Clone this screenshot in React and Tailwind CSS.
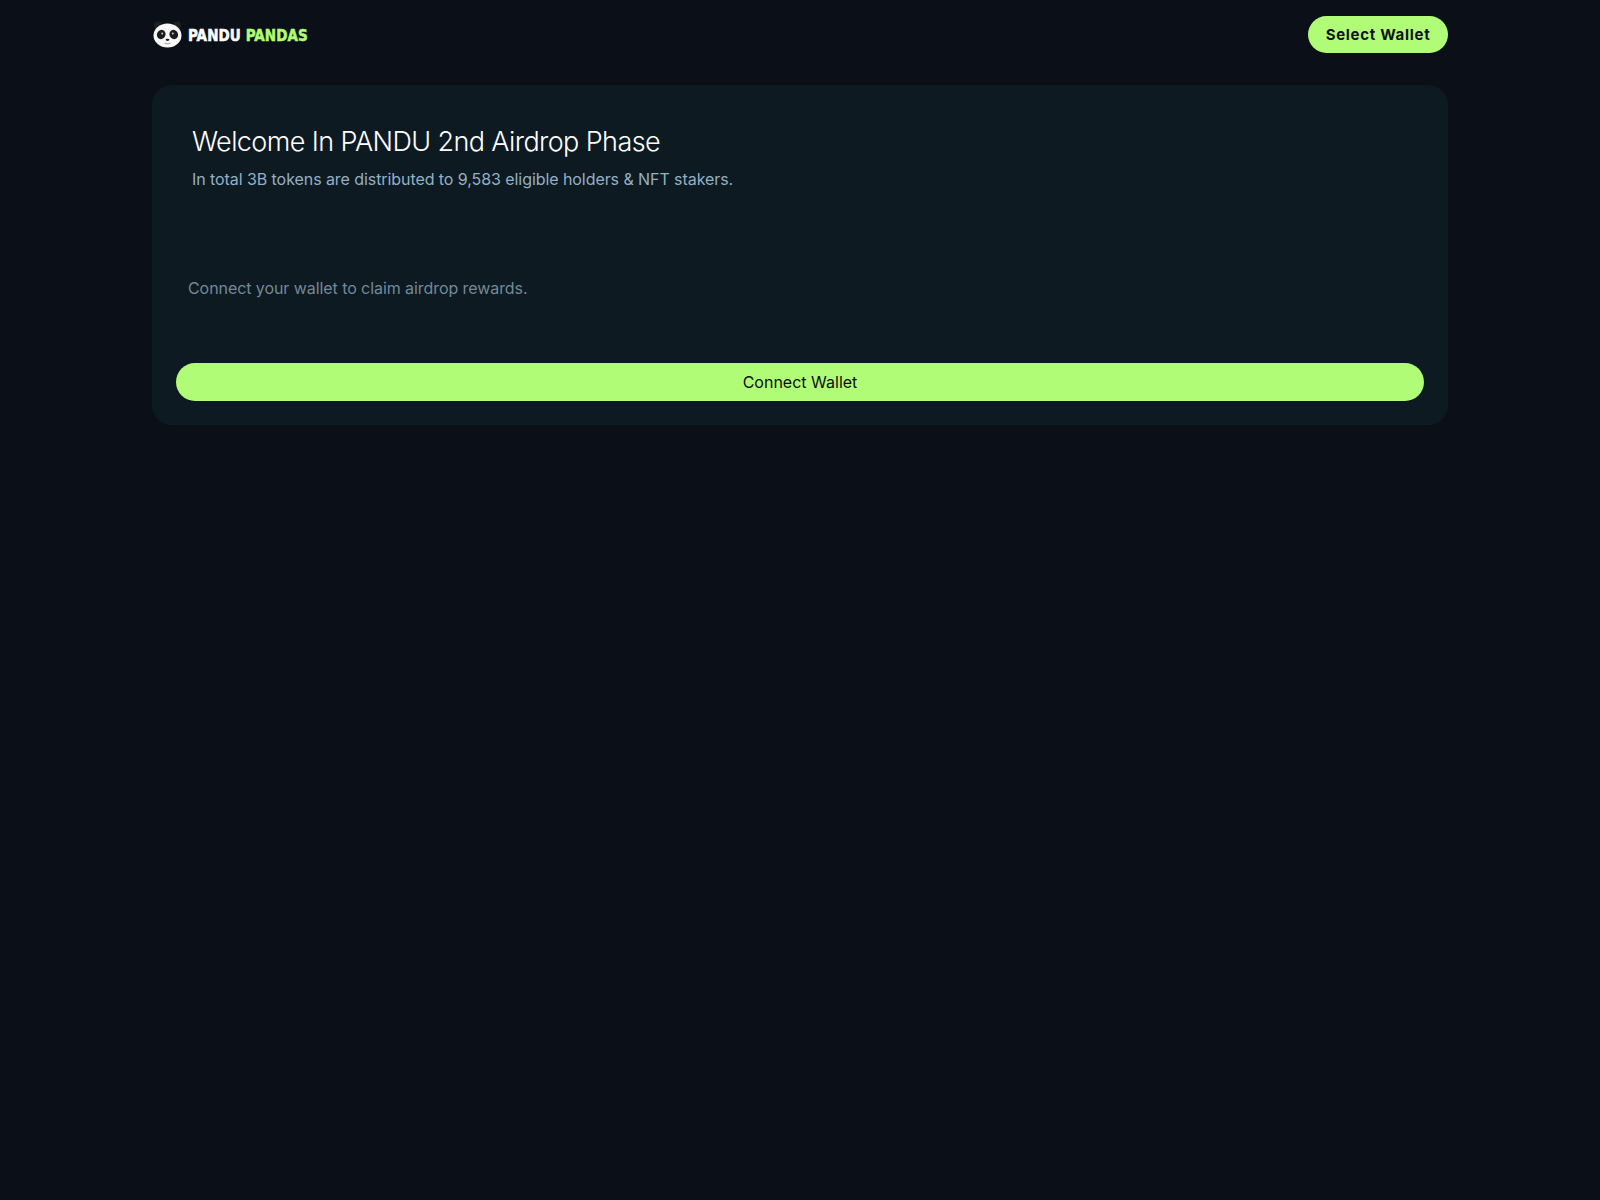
import React from 'react'

function PandaLogo() {
  return (
    <svg width="29" height="27" viewBox="0 0 30 28" className="shrink-0">
      <circle cx="5" cy="4.5" r="4" fill="#1f1f1f" />
      <circle cx="25" cy="4.5" r="4" fill="#1f1f1f" />
      <ellipse cx="15" cy="15" rx="14.5" ry="12.5" fill="#f7f7f7" />
      <ellipse cx="8.5" cy="14" rx="4.4" ry="5" fill="#1c1c1c" transform="rotate(25 8.5 14)" />
      <ellipse cx="21.5" cy="14" rx="4.4" ry="5" fill="#1c1c1c" transform="rotate(-25 21.5 14)" />
      <circle cx="9.5" cy="13" r="1" fill="#cccccc" />
      <circle cx="20.5" cy="13" r="1" fill="#cccccc" />
      <ellipse cx="15" cy="19.5" rx="2" ry="1.2" fill="#1c1c1c" />
      <path d="M12 23c2 .8 4 .8 6 0" stroke="#999999" strokeWidth="1" fill="none" />
    </svg>
  )
}

export default function App() {
  return (
    <div className="min-h-screen bg-[#0b0f17] font-['Inter',sans-serif]">
      <div className="mx-auto w-[1296px]">
        {/* Header */}
        <header className="flex h-[85px] items-center justify-between pb-[16px]">
          <div className="flex items-center gap-[6px] pl-[1px]">
            <PandaLogo />
            <span className="pt-[3px] font-['DejaVu_Sans',sans-serif] text-[15px] font-bold uppercase leading-none tracking-[0.1px] text-white font-stretch-condensed [-webkit-text-stroke:0.5px]">
              Pandu <span className="text-[#b1fc76]">Pandas</span>
            </span>
          </div>
          <button className="h-[37px] w-[140px] rounded-full bg-[#b1fc76] pt-[1px] text-center text-[15px] font-bold tracking-[0.7px] text-[#10131a]">
            Select Wallet
          </button>
        </header>

        {/* Airdrop card */}
        <main className="flex h-[340px] flex-col rounded-[20px] bg-[#0d1a22] px-[24px] pb-[24px]">
          <div className="pl-[16px] pt-[37px]">
            <h1 className="text-[27px] font-[350] leading-[40px] tracking-[-0.6px] text-white">
              Welcome In PANDU 2nd Airdrop Phase
            </h1>
            <p className="mt-[5px] text-[16px] leading-[24px] tracking-[-0.07px] text-[#94b0c4]">
              In total 3B tokens are distributed to 9,583 eligible holders &amp; NFT stakers.
            </p>
          </div>
          <p className="mt-[85px] pl-[12px] text-[16px] leading-[24px] tracking-[-0.07px] text-[#748899]">
            Connect your wallet to claim airdrop rewards.
          </p>
          <button className="mt-auto h-[38px] w-full rounded-full bg-[#b1fc76] text-[16px] text-[#0a0f16]">
            Connect Wallet
          </button>
        </main>
      </div>
    </div>
  )
}
